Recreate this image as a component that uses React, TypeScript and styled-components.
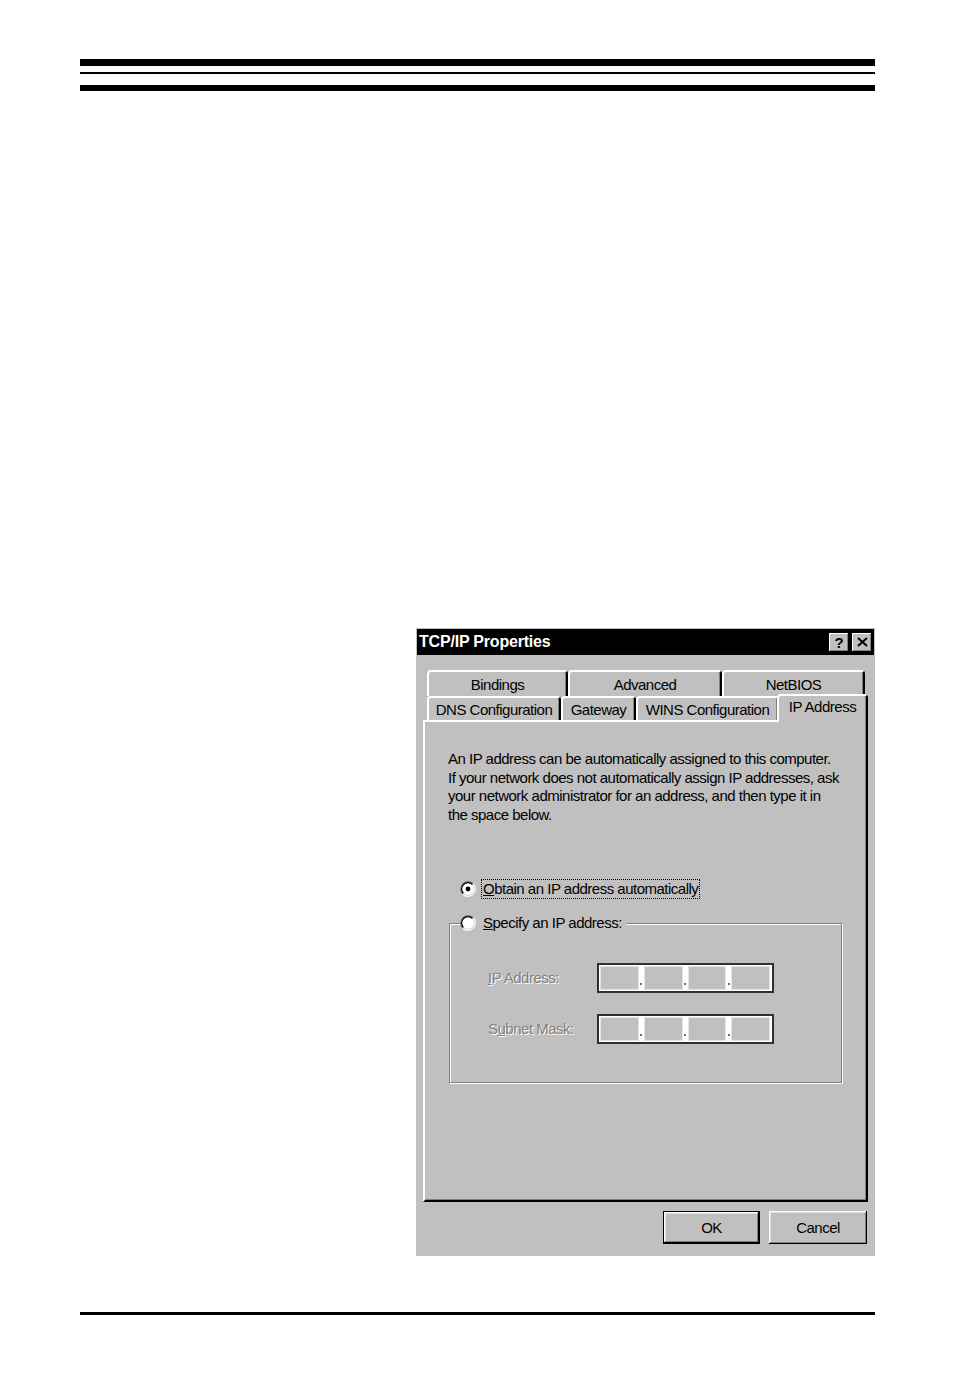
import React from "react";
import styled, { createGlobalStyle, css } from "styled-components";

// the scan uses a narrow system face; Liberation Sans with tighter spacing keeps the same widths
const ui = `"Liberation Sans", Arial, sans-serif`;
const uiText = css`
  font-family: ${ui};
  font-size: 15px;
  letter-spacing: -0.5px;
  color: #000;
`;

const GlobalStyle = createGlobalStyle`
  html, body {
    margin: 0;
    padding: 0;
    background: #fff;
  }
  body {
    font-family: "Liberation Sans", Arial, sans-serif;
  }
`;

const Page = styled.div`
  width: 954px;
  min-height: 1378px;
  box-sizing: border-box;
  padding: 59px 79px 0 80px;
  display: flex;
  flex-direction: column;
`;

const Rule = styled.div<{ $h: number; $gap: number }>`
  height: ${(p) => p.$h}px;
  margin-top: ${(p) => p.$gap}px;
  background: #000;
`;

const Dialog = styled.div`
  margin: 537px 0 0 336px;
  width: 459px;
  height: 628px;
  box-sizing: border-box;
  padding-top: 1px;
  background: #c0c0c0;
  display: flex;
  flex-direction: column;
`;

const TitleBar = styled.div`
  height: 26px;
  margin: 0 1px;
  padding: 0 2px 0 2px;
  background: #000;
  color: #fff;
  display: flex;
  align-items: center;
  font: bold 16px "Liberation Sans", Arial, sans-serif;
  letter-spacing: -0.2px;
`;

const Title = styled.span`
  flex: 1;
`;

const TitleButton = styled.div`
  width: 20px;
  height: 19px;
  margin-left: 3px;
  box-sizing: border-box;
  background: #c0c0c0;
  color: #000;
  display: flex;
  align-items: center;
  justify-content: center;
  font: bold 15px "Liberation Sans", Arial, sans-serif;
  box-shadow: inset -1px -1px #000, inset 1px 1px #fff, inset -2px -2px #808080;
`;

const Body = styled.div`
  flex: 1;
  display: flex;
  flex-direction: column;
  padding: 15px 7px 12px 7px;
`;

const TabRow = styled.div<{ $h: number }>`
  display: flex;
  height: ${(p) => p.$h}px;
  padding-left: 4px;
`;

const Tab = styled.div<{ $w: number; $active?: boolean }>`
  width: ${(p) => p.$w}px;
  height: 100%;
  box-sizing: border-box;
  border: 2px solid;
  border-bottom: none;
  border-color: #fff #000 transparent #fff;
  border-radius: 4px 4px 0 0;
  box-shadow: inset -1px 0 #808080;
  background: #c0c0c0;
  display: flex;
  align-items: center;
  justify-content: center;
  padding-top: 1px;
  white-space: nowrap;
  ${uiText}
  ${(p) =>
    p.$active &&
    css`
      position: relative;
      z-index: 1;
      margin: -2px 0 0 -2px;
      height: calc(100% + 4px);
      padding: 0 0 6px 0;
    `}
`;

const Panel = styled.div`
  height: 482px;
  box-sizing: border-box;
  border: 2px solid;
  border-color: #fff #000 #000 #fff;
  box-shadow: inset -1px -1px #808080;
  padding: 28px 0 0 23px;
  display: flex;
  flex-direction: column;
  align-items: flex-start;
`;

const Para = styled.p`
  margin: 0;
  line-height: 18.7px;
  white-space: nowrap;
  ${uiText}
`;

const RadioRow = styled.div<{ $top: number }>`
  display: flex;
  align-items: center;
  gap: 5px;
  margin: ${(p) => p.$top}px 0 0 12px;
  height: 20px;
`;

const OptionLabel = styled.span<{ $focus?: boolean }>`
  ${uiText}
  padding: 0 1px;
  line-height: 18px;
  white-space: nowrap;
  border: 1px dotted ${(p) => (p.$focus ? "#000" : "transparent")};
`;

const Key = styled.span`
  text-decoration: underline;
`;

const GroupBox = styled.div`
  position: relative;
  margin: 24px 0 0 1px;
  width: 393px;
  height: 160px;
  box-sizing: border-box;
  border: 1px solid #808080;
  box-shadow: inset 1px 1px #fff, 1px 1px #fff;
  padding: 39px 0 0 38px;
`;

const Legend = styled.div`
  position: absolute;
  top: -11px;
  left: 10px;
  display: flex;
  align-items: center;
  gap: 5px;
  padding-right: 2px;
  background: #c0c0c0;
  height: 20px;
`;

const FieldGrid = styled.div`
  display: grid;
  grid-template-columns: 109px 177px;
  row-gap: 21px;
  align-items: center;
`;

const DisabledLabel = styled.span`
  ${uiText}
  color: #808080;
  text-shadow: 1px 1px 0 #fff;
  white-space: nowrap;
`;

const IpField = styled.div`
  width: 177px;
  height: 30px;
  box-sizing: border-box;
  border: 2px solid #303030;
  background: #fff;
  padding: 1px 2px 1px 1px;
  display: flex;
`;

const IpCell = styled.div`
  flex: 1;
  background: #c0c0c0;
  box-shadow: inset 0 0 0 1px #e4e4e4;
`;

const IpDot = styled.div`
  width: 5px;
  display: flex;
  align-items: flex-end;
  justify-content: center;
  padding-bottom: 5px;
  box-sizing: border-box;
  &::after {
    content: "";
    width: 2px;
    height: 2px;
    background: #707070;
  }
`;

const ButtonRow = styled.div`
  display: flex;
  justify-content: flex-end;
  gap: 9px;
  margin-top: 9px;
  padding-right: 1px;
`;

const Button = styled.div<{ $w: number; $default?: boolean }>`
  width: ${(p) => p.$w}px;
  height: 33px;
  box-sizing: border-box;
  background: #c0c0c0;
  display: flex;
  align-items: center;
  justify-content: center;
  ${uiText}
  box-shadow: inset -1px -1px #000, inset 1px 1px #fff, inset -2px -2px #808080,
    inset 2px 2px #dfdfdf;
  ${(p) =>
    p.$default &&
    css`
      border: 1px solid #000;
    `}
`;

function Radio({ checked }: { checked?: boolean }) {
  return (
    <svg width="16" height="16" viewBox="0 0 16 16">
      <circle cx="8" cy="8" r="6.5" fill="#fff" />
      <path d="M2.7 13.3 A7.5 7.5 0 0 1 13.3 2.7" fill="none" stroke="#808080" strokeWidth="1.2" />
      <path d="M13.3 2.7 A7.5 7.5 0 0 1 2.7 13.3" fill="none" stroke="#fff" strokeWidth="1.2" />
      <path d="M3.5 12.5 A6.3 6.3 0 0 1 12.5 3.5" fill="none" stroke="#000" strokeWidth="1.2" />
      <path d="M12.5 3.5 A6.3 6.3 0 0 1 3.5 12.5" fill="none" stroke="#dfdfdf" strokeWidth="1.2" />
      {checked && <circle cx="8" cy="8" r="2.4" fill="#000" />}
    </svg>
  );
}

function CloseGlyph() {
  return (
    <svg width="11" height="10" viewBox="0 0 11 10">
      <path d="M1 1 L10 9 M10 1 L1 9" stroke="#000" strokeWidth="2" />
    </svg>
  );
}

function IpInput() {
  return (
    <IpField>
      <IpCell />
      <IpDot />
      <IpCell />
      <IpDot />
      <IpCell />
      <IpDot />
      <IpCell />
    </IpField>
  );
}

const backTabs = [
  { label: "Bindings", w: 141 },
  { label: "Advanced", w: 154 },
  { label: "NetBIOS", w: 143 },
];

const frontTabs = [
  { label: "DNS Configuration", w: 134 },
  { label: "Gateway", w: 75 },
  { label: "WINS Configuration", w: 143 },
  { label: "IP Address", w: 91, active: true },
];

export default function App() {
  return (
    <>
      <GlobalStyle />
      <Page>
        <Rule $h={7} $gap={0} />
        <Rule $h={2} $gap={6} />
        <Rule $h={6} $gap={11} />

        <Dialog>
          <TitleBar>
            <Title>TCP/IP Properties</Title>
            <TitleButton>?</TitleButton>
            <TitleButton>
              <CloseGlyph />
            </TitleButton>
          </TitleBar>

          <Body>
            <TabRow $h={26}>
              {backTabs.map((t) => (
                <Tab key={t.label} $w={t.w}>
                  {t.label}
                </Tab>
              ))}
            </TabRow>
            <TabRow $h={24}>
              {frontTabs.map((t) => (
                <Tab key={t.label} $w={t.w} $active={t.active}>
                  {t.label}
                </Tab>
              ))}
            </TabRow>

            <Panel>
              <Para>
                An IP address can be automatically assigned to this computer.
                <br />
                If your network does not automatically assign IP addresses, ask
                <br />
                your network administrator for an address, and then type it in
                <br />
                the space below.
              </Para>

              <RadioRow $top={54}>
                <Radio checked />
                <OptionLabel $focus>
                  <Key>O</Key>btain an IP address automatically
                </OptionLabel>
              </RadioRow>

              <GroupBox>
                <Legend>
                  <Radio />
                  <OptionLabel>
                    <Key>S</Key>pecify an IP address:
                  </OptionLabel>
                </Legend>
                <FieldGrid>
                  <DisabledLabel>
                    <Key>I</Key>P Address:
                  </DisabledLabel>
                  <IpInput />
                  <DisabledLabel>
                    S<Key>u</Key>bnet Mask:
                  </DisabledLabel>
                  <IpInput />
                </FieldGrid>
              </GroupBox>
            </Panel>

            <ButtonRow>
              <Button $w={97} $default>
                OK
              </Button>
              <Button $w={98}>Cancel</Button>
            </ButtonRow>
          </Body>
        </Dialog>

        <Rule $h={3} $gap={56} />
      </Page>
    </>
  );
}
